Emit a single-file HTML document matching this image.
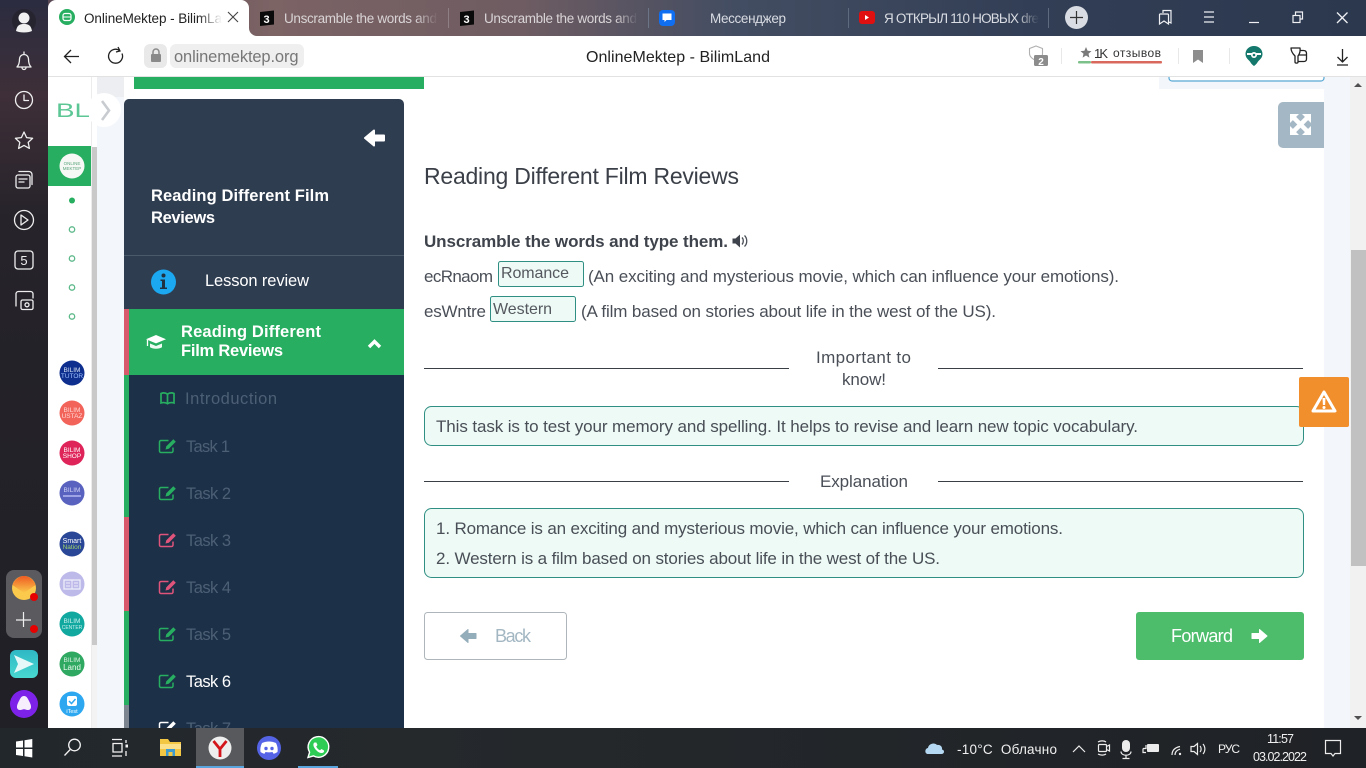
<!DOCTYPE html>
<html lang="ru"><head><meta charset="utf-8"><title>OnlineMektep - BilimLand</title>
<style>
html,body{margin:0;padding:0;width:1366px;height:768px;overflow:hidden;background:#fff}
svg{display:block;position:absolute;left:0;top:0}
text{font-family:"Liberation Sans","Noto Sans CJK SC",sans-serif;white-space:pre}
</style></head><body>
<svg width="1366" height="768" viewBox="0 0 1366 768" xmlns="http://www.w3.org/2000/svg">
<defs>
<linearGradient id="tabbar" x1="0" x2="1" y1="0" y2="0">
<stop offset="0" stop-color="#5a4a55"/><stop offset=".17" stop-color="#7c6364"/><stop offset=".36" stop-color="#6e5c62"/><stop offset=".52" stop-color="#434d62"/><stop offset=".75" stop-color="#323e55"/><stop offset="1" stop-color="#2c384e"/>
</linearGradient>
<linearGradient id="side" x1="0" x2="0" y1="0" y2="1">
<stop offset="0" stop-color="#2b2c40"/><stop offset=".13" stop-color="#3e2f38"/><stop offset=".3" stop-color="#26232a"/><stop offset="1" stop-color="#202026"/>
</linearGradient>
<linearGradient id="task" x1="0" x2="1" y1="0" y2="0"><stop offset="0" stop-color="#22272c"/><stop offset=".3" stop-color="#25292c"/><stop offset="1" stop-color="#1f2226"/></linearGradient>
<linearGradient id="t1" gradientUnits="userSpaceOnUse" x1="198" x2="222" y1="0" y2="0"><stop offset="0" stop-color="#222"/><stop offset="1" stop-color="#222" stop-opacity="0"/></linearGradient>
<linearGradient id="t2" gradientUnits="userSpaceOnUse" x1="415" x2="438" y1="0" y2="0"><stop offset="0" stop-color="#d9d4d6"/><stop offset="1" stop-color="#d9d4d6" stop-opacity="0"/></linearGradient>
<linearGradient id="t3" gradientUnits="userSpaceOnUse" x1="615" x2="638" y1="0" y2="0"><stop offset="0" stop-color="#d9d4d6"/><stop offset="1" stop-color="#d9d4d6" stop-opacity="0"/></linearGradient>
<linearGradient id="t5" gradientUnits="userSpaceOnUse" x1="1016" x2="1039" y1="0" y2="0"><stop offset="0" stop-color="#d9dce2"/><stop offset="1" stop-color="#d9dce2" stop-opacity="0"/></linearGradient>
<linearGradient id="mail" x1="0" x2="0" y1="0" y2="1"><stop offset="0" stop-color="#ee5a22"/><stop offset="1" stop-color="#fbc94b"/></linearGradient>
<linearGradient id="send" x1="0" x2="0" y1="0" y2="1"><stop offset="0" stop-color="#2fb8c4"/><stop offset="1" stop-color="#48d8d0"/></linearGradient>
<g id="ed"><path d="M173 447.500v3.500a1.500 1.500 0 0 1-1.500 1.500h-10.500a1.500 1.500 0 0 1-1.500-1.500v-9a1.500 1.500 0 0 1 1.500-1.500h7.500" fill="none" stroke="currentColor" stroke-width="1.500"/><path d="M165.500 449.500l.8-3.300 7-7 2.500 2.500-7 7z" fill="currentColor"/></g>
</defs>

<!-- page -->
<rect width="1366" height="768" fill="#fff"/>
<rect x="97" y="77" width="27" height="651" fill="#f3f7fb"/>
<rect x="97" y="77" width="27" height="20" fill="#eceef1"/>
<rect x="1324" y="89" width="26" height="639" fill="#f3f7fb"/>
<rect x="1159" y="77" width="191" height="12" fill="#f3f7fb"/>
<path d="M1169 77v1a3 3 0 0 0 3 3h149a3 3 0 0 0 3-3v-1" fill="#fff" stroke="#58a8d4" stroke-width="1.200"/>
<rect x="134" y="77" width="290" height="12" fill="#27ae60"/>

<!-- main scrollbar -->
<rect x="1350" y="77" width="16" height="651" fill="#f1f1f1"/>
<rect x="1351" y="250" width="15" height="316" fill="#c1c1c1"/>
<path d="M1354 87l4-4 4 4z" fill="#505050"/>
<path d="M1354 716l4 4 4-4z" fill="#505050"/>

<!-- left rail -->
<rect x="48" y="77" width="43" height="651" fill="#fff"/>
<rect x="91" y="77" width="1" height="651" fill="#ececec"/>
<rect x="92" y="147" width="5" height="498" fill="#c9c9c9"/>
<rect x="92" y="645" width="5" height="83" fill="#f3f3f3"/>
<circle cx="104" cy="110" r="17" fill="#fff"/>
<path d="M102 101l7 9.500-7 9.500" fill="none" stroke="#c8ccd0" stroke-width="2.600"/>
<text x="56" y="117" font-size="19" fill="#5cc795" textLength="34" lengthAdjust="spacingAndGlyphs">BL</text>
<rect x="48" y="146" width="43" height="40" fill="#27ae60"/>
<circle cx="72" cy="166" r="12.500" fill="#f6f8f6"/>
<text x="72" y="165" font-size="4.500" fill="#5aa57a" text-anchor="middle">ONLINE</text>
<text x="72" y="170" font-size="4.500" fill="#5aa57a" text-anchor="middle">MEKTEP</text>
<circle cx="72" cy="200.500" r="3" fill="#27ae60"/>
<g fill="none" stroke="#5cb98a" stroke-width="1.300"><circle cx="72" cy="229.500" r="2.700"/><circle cx="72" cy="258.500" r="2.700"/><circle cx="72" cy="287.500" r="2.700"/><circle cx="72" cy="316.500" r="2.700"/></g>
<g text-anchor="middle" font-size="6.500" fill="#d8e4f5">
<circle cx="72" cy="373" r="12.500" fill="#0e2f8e"/><text x="72" y="372">BILIM</text><text x="72" y="378" fill="#9dc0ff">TUTOR</text>
<circle cx="72" cy="413" r="12.500" fill="#f2635a"/><text x="72" y="412" fill="#ffd8d4">BILIM</text><text x="72" y="418" fill="#ffd8d4">USTAZ</text>
<circle cx="72" cy="453" r="12.500" fill="#df2459"/><text x="72" y="452" fill="#fff">BILIM</text><text x="72" y="458" fill="#fff">SHOP</text>
<circle cx="72" cy="493" r="12.500" fill="#5a62bf"/><text x="72" y="492" fill="#cfd2f5">BILIM</text><rect x="63" y="495" width="18" height="2" fill="#9ea3e6"/>
<circle cx="72" cy="544" r="12.500" fill="#2a4797"/><text x="72" y="543" fill="#fff" font-size="7">Smart</text><text x="72" y="549" fill="#9ed06a">Nation</text>
<circle cx="72" cy="584" r="12.500" fill="#bdb9e9"/><rect x="64" y="580" width="16" height="9" fill="none" stroke="#eeedfb" stroke-width="1.300"/><path d="M72 580v9M66 583h4M66 586h4M74 583h4M74 586h4" stroke="#eeedfb"/>
<circle cx="72" cy="624" r="12.500" fill="#11a8a0"/><text x="72" y="623" fill="#c9f0ec">BILIM</text><text x="72" y="629" fill="#c9f0ec" font-size="5">CENTER</text>
<circle cx="72" cy="664" r="12.500" fill="#2fa861"/><text x="72" y="662" fill="#d8f3e2">BILIM</text><text x="72" y="670" fill="#eafbf0" font-size="8">Land</text>
<circle cx="72" cy="704" r="12.500" fill="#2da8f0"/><rect x="67" y="696" width="10" height="10" rx="2" fill="#fff"/><path d="M69 701l2.500 2.500 4-4.500" fill="none" stroke="#2da8f0" stroke-width="1.500"/><text x="72" y="713" fill="#fff" font-size="5.500">iTest</text>
</g>

<!-- sidebar -->
<path d="M124 728V104a5 5 0 0 1 5-5h270a5 5 0 0 1 5 5v624z" fill="#2f3d50"/>
<rect x="124" y="255" width="280" height="1" fill="#4b5a6b"/>
<path d="M374 130.500l-9 7.500 9 7.500v-5h10v-5h-10z" fill="#fff" stroke="#fff" stroke-width="2" stroke-linejoin="round"/>
<g font-weight="700" font-size="16.500" fill="#fff">
<text x="151" y="201" textLength="178">Reading Different Film</text>
<text x="151" y="223" textLength="64">Reviews</text>
</g>
<circle cx="163.500" cy="282" r="12.500" fill="#1ba8f1"/>
<circle cx="163.500" cy="275.500" r="2" fill="#20303f"/>
<path d="M160.500 279.500h4.500v8h2v1.500h-7v-1.500h2v-6.500h-1.500z" fill="#20303f"/>
<text x="205" y="286" font-size="16.500" fill="#fff" textLength="104">Lesson review</text>
<rect x="124" y="309" width="280" height="66" fill="#27ae60"/>
<rect x="124" y="309" width="5" height="66" fill="#d9596c"/>
<path d="M156 335l10 4.200-10 4.200-10-4.200z" fill="#fff"/><path d="M150 343.500v3.800c3 2 9 2 12 0v-3.800l-6 2.500z" fill="#eefaf2"/><path d="M147.500 340v6" stroke="#fff" stroke-width="1.300"/>
<g font-weight="700" font-size="16.500" fill="#fff">
<text x="181" y="337" textLength="140">Reading Different</text>
<text x="181" y="356" textLength="102">Film Reviews</text>
</g>
<path d="M369 347l5.500-5.500 5.500 5.500" fill="none" stroke="#fff" stroke-width="3.400"/>
<rect x="129" y="375" width="275" height="353" fill="#1c3047"/>
<rect x="124" y="375" width="5" height="142" fill="#27ae60"/>
<rect x="124" y="517" width="5" height="94" fill="#d9596c"/>
<rect x="124" y="611" width="5" height="94" fill="#27ae60"/>
<rect x="124" y="705" width="5" height="23" fill="#7c8590"/>

<path d="M161 393.500c2.500-1 4.500-.8 6.500.7 2-1.500 4-1.700 6.500-.7v9.500c-2.500-.8-4.500-.6-6.500.7-2-1.300-4-1.500-6.500-.7zM167.500 394.200v9.500" fill="none" stroke="#27ae60" stroke-width="1.700"/>
<g font-size="16.500" fill="#4c5f75">
<text x="185" y="404" textLength="92">Introduction</text>
<text x="186" y="452" textLength="44">Task 1</text>
<text x="186" y="499" textLength="45">Task 2</text>
<text x="186" y="546" textLength="45">Task 3</text>
<text x="186" y="593" textLength="45">Task 4</text>
<text x="186" y="640" textLength="45">Task 5</text>
<text x="186" y="687" textLength="45" fill="#fff">Task 6</text>
<text x="186" y="734" textLength="45">Task 7</text>
</g>
<use href="#ed" color="#27ae60"/>
<use href="#ed" transform="translate(0,47)" color="#27ae60"/>
<use href="#ed" transform="translate(0,94)" color="#e0547c"/>
<use href="#ed" transform="translate(0,141)" color="#e0547c"/>
<use href="#ed" transform="translate(0,188)" color="#27ae60"/>
<use href="#ed" transform="translate(0,235)" color="#27ae60"/>
<use href="#ed" transform="translate(0,282)" color="#fff"/>

<!-- content -->
<path d="M1278 107a5 5 0 0 1 5-5h41v46h-41a5 5 0 0 1-5-5z" fill="#a4b7c4"/>
<path d="M1292.500 116.500l16 16M1308.500 116.500l-16 16" stroke="#fff" stroke-width="4.500"/>
<g fill="#fff"><path d="M1290 114h9l-9 9z"/><path d="M1311 114h-9l9 9z"/><path d="M1290 135h9l-9-9z"/><path d="M1311 135h-9l9-9z"/></g>

<text x="424" y="184" font-size="23" fill="#3b4048" textLength="315">Reading Different Film Reviews</text>
<text x="424" y="247" font-size="17" font-weight="700" fill="#3f444c" textLength="304">Unscramble the words and type them.</text>
<path d="M732.500 238.500h3l4.500-4v13l-4.500-4h-3z" fill="#3f444c"/><path d="M742 237.500c1.700 1.700 1.700 5.300 0 7M744.500 235.500c3 2.800 3 8.200 0 11" fill="none" stroke="#4a4f57" stroke-width="1.300"/>

<g font-size="17" fill="#4a4f57">
<text x="424" y="282" textLength="69">ecRnaom</text>
<text x="588" y="282" textLength="531">(An exciting and mysterious movie, which can influence your emotions).</text>
<text x="424" y="317" textLength="62">esWntre</text>
<text x="581" y="317" textLength="415">(A film based on stories about life in the west of the US).</text>
</g>
<rect x="498.500" y="261.500" width="85" height="25" rx="2" fill="#edfaf5" stroke="#2f8f83"/>
<text x="501" y="278" font-size="16" fill="#55595f" textLength="68">Romance</text>
<rect x="490.500" y="296.500" width="85" height="25" rx="2" fill="#edfaf5" stroke="#2f8f83"/>
<text x="493" y="314" font-size="16" fill="#55595f" textLength="59">Western</text>

<rect x="424" y="368" width="365" height="1" fill="#3a3f45"/>
<rect x="938" y="368" width="365" height="1" fill="#3a3f45"/>
<g font-size="17" fill="#4a4f57">
<text x="816" y="363" textLength="95">Important to</text>
<text x="842" y="385" textLength="44">know!</text>
<text x="820" y="487" textLength="88">Explanation</text>
</g>
<rect x="424" y="481" width="365" height="1" fill="#3a3f45"/>
<rect x="938" y="481" width="365" height="1" fill="#3a3f45"/>

<rect x="424.500" y="406.500" width="879" height="39" rx="7" fill="#edfaf5" stroke="#2f8f83"/>
<text x="436" y="432" font-size="17" fill="#4a4f57" textLength="702">This task is to test your memory and spelling. It helps to revise and learn new topic vocabulary.</text>
<rect x="424.500" y="508.500" width="879" height="69" rx="7" fill="#edfaf5" stroke="#2f8f83"/>
<text x="436" y="534" font-size="17" fill="#4a4f57" textLength="627">1. Romance is an exciting and mysterious movie, which can influence your emotions.</text>
<text x="436" y="564" font-size="17" fill="#4a4f57" textLength="504">2. Western is a film based on stories about life in the west of the US.</text>

<rect x="424.500" y="612.500" width="142" height="47" rx="3" fill="#fff" stroke="#aeb6bb"/>
<path d="M468 629.500l-7.500 6.500 7.500 6.500v-4h8v-5h-8z" fill="#94adba" stroke="#94adba" stroke-linejoin="round"/>
<text x="495" y="642" font-size="18" fill="#a3b7c3" textLength="36">Back</text>
<rect x="1136" y="612" width="168" height="48" rx="3" fill="#4dbd6c"/>
<text x="1171" y="642" font-size="18" fill="#fff" textLength="62">Forward</text>
<path d="M1259.500 629.500l7.500 6.500-7.500 6.500v-4h-7.500v-5h7.500z" fill="#fff" stroke="#fff" stroke-linejoin="round"/>

<rect x="1299" y="377" width="50" height="50" rx="2" fill="#f28f2d"/>
<path d="M1324 392l11 19h-22z" fill="none" stroke="#fff" stroke-width="3" stroke-linejoin="round"/>
<path d="M1322.500 398h3l-.4 7h-2.200z" fill="#fff"/><circle cx="1324" cy="407.500" r="1.500" fill="#fff"/>

<!-- browser left -->
<rect x="0" y="0" width="48" height="728" fill="url(#side)"/>
<circle cx="24" cy="21" r="12" fill="#26242f"/>
<circle cx="24" cy="18" r="5.500" fill="#f1f1f1"/><path d="M16 31c1-6 4-7 8-7s7 1 8 7c-4 2-12 2-16 0z" fill="#f1f1f1"/>
<g fill="none" stroke="#eee" stroke-width="1.300" stroke-linejoin="round" stroke-linecap="round">
<path d="M17 67c2-2 2.500-4 2.500-8a4.500 4.500 0 0 1 9 0c0 4 .5 6 2.500 8zM22 67.500a2 2 0 0 0 4 0M24 52v2"/>
<circle cx="24" cy="100" r="8.500"/><path d="M24 95v5.500h4.500"/>
<path d="M24 132l2.600 5.600 6 .7-4.400 4.100 1.200 6-5.400-3-5.400 3 1.200-6-4.400-4.100 6-.7z"/>
<rect x="16" y="175" width="14" height="13" rx="2"/><path d="M19 171.500h10a3 3 0 0 1 3 3v10M19 179h8M19 182h5"/>
<circle cx="24" cy="220" r="9.500"/><path d="M21 215v10l7-5z"/>
<rect x="15" y="251" width="18" height="18" rx="3"/>
<path d="M16 306v-12a2.500 2.500 0 0 1 2.500-2.500h12a2.500 2.500 0 0 1 2.500 2.500v4"/><rect x="21" y="300" width="12" height="9.500" rx="1.500"/><circle cx="27" cy="304.800" r="2"/>
</g>
<text x="24" y="265" font-size="13" fill="#eee" text-anchor="middle">5</text>
<rect x="6" y="570" width="36" height="68" rx="8" fill="#5b5a5f"/>
<circle cx="24" cy="588" r="12" fill="#fbc94b"/>
<path d="M12.500 585l11.500 8 11.500-8c-1-4-6-9-11.500-9s-10.500 5-11.500 9z" fill="url(#mail)"/>
<circle cx="34" cy="597" r="4" fill="#e60000"/>
<path d="M23.500 612v15M16 620h15" stroke="#eee" stroke-width="1.200"/>
<circle cx="34" cy="629" r="4" fill="#e60000"/>
<rect x="10" y="650" width="28" height="28" rx="6" fill="url(#send)"/>
<path d="M14 655l20 9-20 9 4-9z" fill="#e6f9f8"/>
<circle cx="24" cy="704" r="14" fill="#7d22e8"/>
<path d="M24 696c3 0 4 3 6 7s1 7-2 7c-2 0-2.500-.8-4-.8s-2 .8-4 .8c-3 0-4-3-2-7s3-7 6-7z" fill="#f6eefc"/>

<!-- tab bar -->
<rect x="48" y="0" width="1318" height="36" fill="url(#tabbar)"/>
<path d="M48 36V8a8 8 0 0 1 8-8h185a8 8 0 0 1 8 8v20a8 8 0 0 0 8 8z" fill="#fff"/>
<circle cx="67" cy="17" r="8" fill="#27ae60"/><rect x="63" y="13.500" width="8" height="7" rx="2" fill="none" stroke="#fff" stroke-width="1.200"/><path d="M63 17h8" stroke="#fff"/>
<text x="84" y="23" font-size="13.500" fill="url(#t1)" textLength="138">OnlineMektep - BilimLa</text>
<path d="M228 12l10 10M238 12l-10 10" stroke="#444" stroke-width="1.100"/>

<path d="M260 12l14-1.500v14l-14 1.500z" fill="#0a0a0a"/><text x="263.500" y="23" font-size="11" font-weight="700" fill="#fff">3</text>
<text x="284" y="23" font-size="13.500" fill="url(#t2)" textLength="153">Unscramble the words and</text>
<rect x="448" y="8" width="1" height="20" fill="#8d7f83"/>
<path d="M460 12l14-1.500v14l-14 1.500z" fill="#0a0a0a"/><text x="463.500" y="23" font-size="11" font-weight="700" fill="#fff">3</text>
<text x="484" y="23" font-size="13.500" fill="url(#t3)" textLength="153">Unscramble the words and</text>
<rect x="648" y="8" width="1" height="20" fill="#6b7585"/>
<rect x="659" y="10" width="16" height="16" rx="4" fill="#0f6ff0"/><path d="M662.500 13.500h9v6.500h-5l-2 2v-2h-2z" fill="#fff"/>
<text x="710" y="23" font-size="13.500" fill="#d9dce2" textLength="76">Мессенджер</text>
<rect x="848" y="8" width="1" height="20" fill="#5e6a7d"/>
<rect x="859" y="11" width="16" height="13" rx="3" fill="#e01010"/><path d="M865 15l4 2.500-4 2.500z" fill="#fff"/>
<text x="884" y="23" font-size="13.500" fill="url(#t5)" textLength="155">Я ОТКРЫЛ 110 НОВЫХ dre</text>
<rect x="1048" y="8" width="1" height="20" fill="#5e6a7d"/>
<circle cx="1076.500" cy="17.500" r="11.500" fill="#d9dce2"/>
<path d="M1076.500 11v13M1070 17.500h13" stroke="#333" stroke-width="1.200"/>
<g fill="none" stroke="#eef0f4" stroke-width="1.200">
<path d="M1160 14h7.500a1 1 0 0 1 1 1v9l-4.500-3-4.500 3v-9.500zM1163 13v-2.500h8v12.500l-2-1"/>
<path d="M1204 12h10M1204 17h10M1204 22h10"/>
<path d="M1249 22.500h10"/>
<rect x="1293" y="15.500" width="7" height="7"/><path d="M1295.500 15v-3h7v7h-2.500"/>
<path d="M1337 12.500l10.500 10.500M1347.500 12.500l-10.500 10.500" stroke-width="1.300"/>
</g>

<!-- toolbar -->
<path d="M48 36h1310a8 8 0 0 1 8 8v32H48z" fill="#fff"/>
<rect x="48" y="76" width="1318" height="1" fill="#e2e2e2"/>
<path d="M79 56.500H65M71 50l-6.500 6.500L71 63" fill="none" stroke="#222" stroke-width="1.300"/>
<path d="M122 53.500a7 7 0 1 1-2-2.700M118 47l2 4-4 1" fill="none" stroke="#222" stroke-width="1.300"/>
<rect x="144" y="44" width="23" height="24" rx="6" fill="#e9e9e9"/>
<rect x="151" y="54" width="10" height="8" rx="1" fill="#8a8a8a"/><path d="M153 54v-2a3 3 0 0 1 6 0v2" fill="none" stroke="#8a8a8a" stroke-width="1.500"/>
<rect x="170" y="44" width="134" height="24" rx="6" fill="#efefef"/>
<text x="174" y="62" font-size="16.500" fill="#777" textLength="124.500">onlinemektep.org</text>
<text x="586" y="62" font-size="16" fill="#222" textLength="184">OnlineMektep - BilimLand</text>

<path d="M1036 46l6.500 2.500v5c0 1-.2 2-.5 2.800h-4v5.200c-5-2-8.500-4.500-8.500-8v-5z" fill="none" stroke="#b0b0b0" stroke-width="1.100"/>
<rect x="1034" y="55" width="14" height="11" rx="1.500" fill="#8c8c8c"/>
<text x="1041" y="65" font-size="10" font-weight="700" fill="#fff" text-anchor="middle">2</text>
<rect x="1061" y="48" width="1" height="16" fill="#e8e8e8"/>
<path d="M1086 47l1.600 3.700 3.900.4-3 2.600.9 3.900-3.400-2.100-3.400 2.100.9-3.900-3-2.600 3.900-.4z" fill="#7a7a7a"/>
<text x="1094" y="58" font-size="13" fill="#333" textLength="14">1K</text>
<text x="1113" y="57" font-size="12" fill="#333" textLength="48">отзывов</text>
<rect x="1078" y="61" width="13" height="2.500" rx="1" fill="#7cc08a"/>
<rect x="1091" y="61" width="71" height="2.500" rx="1" fill="#d9695c"/>
<rect x="1178" y="48" width="1" height="16" fill="#e8e8e8"/>
<path d="M1193 50h10v13l-5-3.500-5 3.500z" fill="#8d8d8d"/>
<rect x="1229" y="48" width="1" height="16" fill="#e8e8e8"/>
<path d="M1254 46c5 0 8.500 3.500 8.500 8 0 3.500-2.500 5.500-4 7-1.200 1.200-1.500 3-4.500 5-3-2-3.300-3.800-4.500-5-1.500-1.500-4-3.500-4-7 0-4.500 3.500-8 8.500-8z" fill="#14796c"/>
<path d="M1247 54h14" stroke="#fff" stroke-width="2"/><circle cx="1254" cy="55" r="3" fill="#fff"/><circle cx="1254" cy="55" r="1.300" fill="#14796c"/>
<g fill="none" stroke="#222" stroke-width="1.300" stroke-linejoin="round">
<path d="M1291 48h9c.5 3-.5 6-2 8v6c0 1.500-3 1.500-3 0v-6c-2-2-4-5-4-8z"/>
<path d="M1300 50.500h3.500c2 0 3 1 3 3v5.500c0 1.500-1 2.500-2.500 2.500h-6M1298.500 55h8"/>
<path d="M1342.500 49v13M1337.500 57l5 5 5-5M1337 65h11"/>
</g>

<!-- taskbar -->
<rect x="0" y="728" width="1366" height="40" fill="url(#task)"/>
<rect x="196" y="728" width="48" height="40" fill="#57595c"/>
<rect x="196" y="766" width="48" height="2" fill="#5aa5dd"/>
<rect x="298" y="766" width="40" height="2" fill="#5aa5dd"/>
<path d="M16 741.500l7-1v7h-7zM24.500 740.300l7.800-1.300v8.500h-7.800zM16 749h7v7l-7-1zM24.500 749h7.800v8.500l-7.800-1.200z" fill="#fff"/>
<g fill="none" stroke="#f2f2f2" stroke-width="1.300">
<circle cx="74.500" cy="745" r="5.800"/><path d="M70.200 749.500L64.500 755.500"/>
<path d="M112 739.500h10M112 756h10M113 743.500h9v8.500h-9zM126 740v3M126 751v5"/>
</g>
<rect x="125.500" y="744.500" width="2.500" height="3" fill="#f2f2f2"/>
<path d="M160 739h8l2 3h11v14h-21z" fill="#f3c744"/>
<rect x="160" y="744" width="21" height="5" fill="#fde08a"/>
<rect x="166" y="749" width="9" height="7" fill="#3f9ad0"/><rect x="168.500" y="752" width="4" height="4" fill="#f3c744"/>
<circle cx="220" cy="748" r="11.500" fill="#eee"/>
<path d="M213.500 741l6.500 8 6.500-8M220 749v8" fill="none" stroke="#d3141a" stroke-width="2.800"/>
<circle cx="269" cy="748" r="12" fill="#5564e6"/>
<path d="M262 743c4.500-2 9.500-2 14 0 1.500 3 2 6 1.500 9-1.500 1-2.500 1.500-4 1.700l-1-1.700c-2.500.5-4.500.5-7 0l-1 1.700c-1.500-.2-2.500-.7-4-1.700-.5-3 0-6 1.500-9z" fill="#fff"/>
<circle cx="266" cy="748.500" r="1.700" fill="#5564e6"/><circle cx="272" cy="748.500" r="1.700" fill="#5564e6"/>
<path d="M308 757.500l1.600-5.300a10.300 10.300 0 1 1 3.800 3.700z" fill="#2ecc55" stroke="#fff" stroke-width="1.400"/>
<path d="M314.500 742.500c-1.500 1-1.500 3 0 5.500s4.500 5 7 5c1.500 0 3-1 2.500-2.500l-2.500-1.500-1.500 1.300c-1.500-.5-3-2-3.800-3.800l1.300-1.500-1.200-2.500z" fill="#fff"/>

<path d="M928 754c-3.500 0-3.500-5.500 0-6 .5-4 6-6 9-3 3.500-.5 5.500 2 5 4.500 3 .5 2.500 4.500-.5 4.500z" fill="#b5d9f2"/>
<text x="957" y="754" font-size="13.500" fill="#f0f0f0" textLength="100">-10°C  Облачно</text>
<g fill="none" stroke="#ececec" stroke-width="1.200">
<path d="M1073 752l6-6 6 6"/>
<rect x="1098.500" y="744.500" width="8" height="7" rx="1"/><path d="M1106.500 746.500l3-1.500v6l-3-1.500M1098 742c2.500-1.500 6-1.500 8 0M1098 754c2.500 1.500 6 1.500 8 0"/>
<path d="M1121 751.500c0 5 10 5 10 0M1126 755.500v2.500M1122.500 758.500h7"/>
<path d="M1146 745v3.500h-3M1146 752.500h-3v-4"/>
<path d="M1172 755c0-4.500 3-7.500 8-8.500M1175 755c0-3 2-5 5-5.800"/>
<path d="M1191 746.500h3l3.500-3v11l-3.500-3h-3zM1200 746c1.500 1.500 1.500 4.500 0 6M1203 744c2.500 3 2.500 7 0 10"/>
<path d="M1325.500 740.500h15v13h-5.500l-2 2.500-2-2.500h-5.500z"/>
</g>
<rect x="1122" y="740" width="8" height="12" rx="4" fill="#ececec"/>
<rect x="1147" y="744" width="12" height="8" rx="1" fill="#ececec"/>
<circle cx="1180" cy="754" r="1.200" fill="#ececec"/>
<text x="1218" y="753" font-size="12" fill="#f0f0f0" textLength="22">РУС</text>
<text x="1267" y="743" font-size="12.500" fill="#f0f0f0" textLength="27">11:57</text>
<text x="1253" y="761" font-size="12.500" fill="#f0f0f0" textLength="54">03.02.2022</text>
</svg>
</body></html>
